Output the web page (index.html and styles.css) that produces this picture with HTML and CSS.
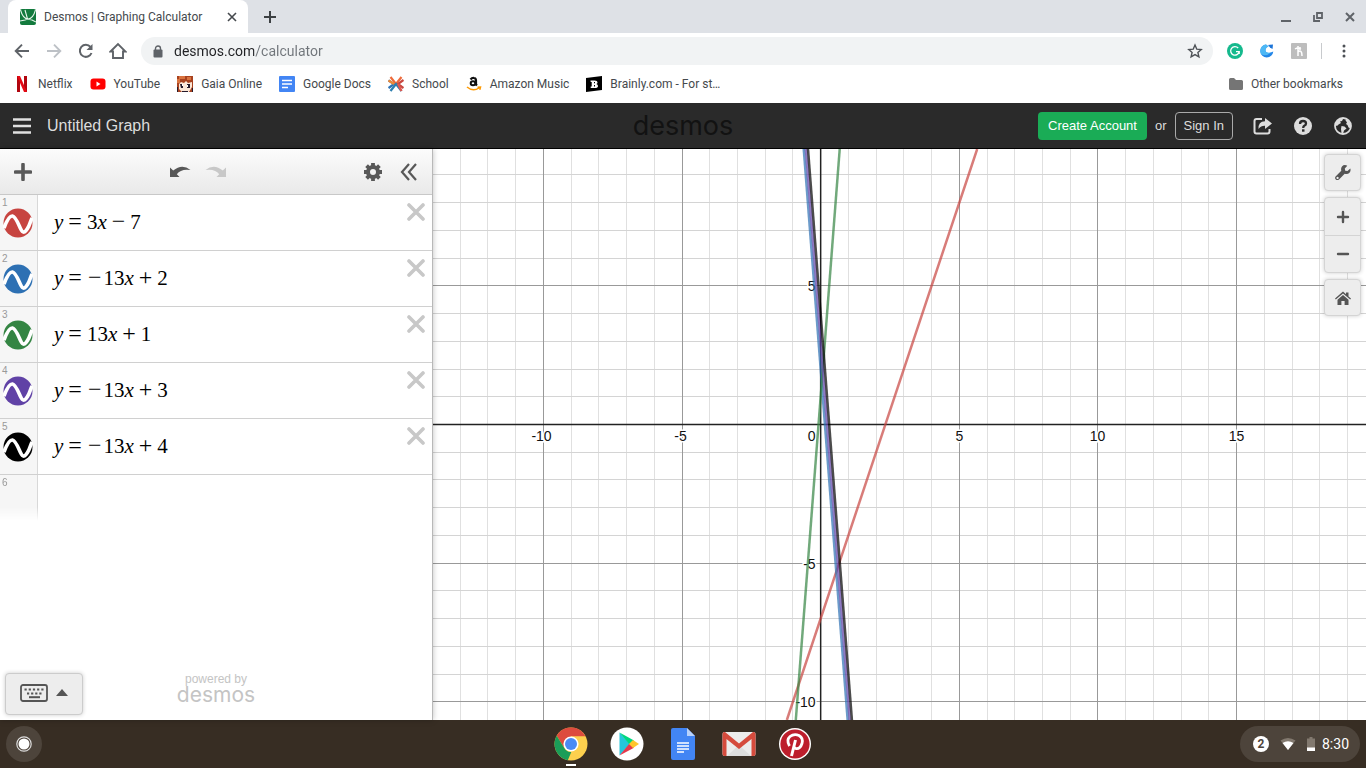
FILE: index.html
```
<!DOCTYPE html>
<html lang="en">
<head>
    <meta charset="UTF-8">
    <title>Desmos | Graphing Calculator</title>
    <link rel="stylesheet" href="styles.css">
</head>
<body>
    <!-- browser window -->
    <div class="tabstrip">
        <div class="tab">
            <svg width="16" height="16" viewBox="0 0 16 16"><rect width="16" height="16" rx="2" fill="#127a3d"/><path d="M.5 1Q3 10 8 10T15.500 1M5 1l2.500 9 4.500 1 4 2M0 12l5-1 3-1" fill="none" stroke="#e8f5ec" stroke-width="1.100"/></svg>
            <span class="tab-title">Desmos | Graphing Calculator</span>
            <button class="tab-close" aria-label="Close tab"><svg width="10" height="10" viewBox="0 0 10 10"><path d="M1 1l8 8M9 1L1 9" stroke="#45494d" stroke-width="1.6"/></svg></button>
        </div>
        <button class="tab-new" aria-label="New tab"><svg width="12" height="12" viewBox="0 0 12 12"><path d="M6 0v12M0 6h12" stroke="#3c4043" stroke-width="2"/></svg></button>
        <div class="window-buttons">
            <button aria-label="Minimize"><svg width="10" height="10" viewBox="0 0 10 10"><path d="M0 9h10" stroke="#5f6368" stroke-width="2"/></svg></button>
            <button aria-label="Restore"><svg width="10" height="10" viewBox="0 0 10 10"><path d="M4 1h5v5H4zM1 3v6h6" fill="none" stroke="#5f6368" stroke-width="1.8"/></svg></button>
            <button aria-label="Close"><svg width="10" height="10" viewBox="0 0 10 10"><path d="M1 1l8 8M9 1L1 9" stroke="#5f6368" stroke-width="2"/></svg></button>
        </div>
    </div>
    <div class="navbar">
        <button class="nav-btn" aria-label="Back"><svg width="16" height="16" viewBox="0 0 16 16"><path d="M15 8H2M8 1.700L1.700 8 8 14.300" fill="none" stroke="#5f6368" stroke-width="1.900"/></svg></button>
        <button class="nav-btn" aria-label="Forward" disabled><svg width="16" height="16" viewBox="0 0 16 16"><path d="M1 8h13M8 1.700L14.300 8 8 14.300" fill="none" stroke="#bdc1c6" stroke-width="1.900"/></svg></button>
        <button class="nav-btn" aria-label="Reload"><svg width="16" height="16" viewBox="0 0 16 16"><path d="M13.500 10A6 6 0 1 1 12.500 4" fill="none" stroke="#5f6368" stroke-width="2"/><path d="M14.500 1v6h-6z" fill="#5f6368"/></svg></button>
        <button class="nav-btn" aria-label="Home"><svg width="18" height="18" viewBox="0 0 18 18"><path d="M1.500 9.500L9 2l7.500 7.500H14V16H4V9.500z" fill="none" stroke="#5f6368" stroke-width="1.900"/></svg></button>
        <div class="omnibox">
            <svg width="10" height="13" viewBox="0 0 10 13"><path d="M2.500 5V3.500a2.500 2.500 0 0 1 5 0V5" fill="none" stroke="#5f6368" stroke-width="1.400"/><rect x="0.500" y="4.500" width="9" height="8" rx="1" fill="#5f6368"/></svg>
            <input class="url" type="text" value="desmos.com/calculator" aria-label="Address">
            <button aria-label="Bookmark this page"><svg width="16" height="16" viewBox="0 0 16 16"><path d="M8 2l1.800 4.200 4.400.4-3.300 2.900 1 4.400L8 11.600l-3.900 2.300 1-4.400L1.800 6.600l4.400-.4z" fill="none" stroke="#4d5156" stroke-width="1.400"/></svg></button>
        </div>
        <div class="extensions">
            <button aria-label="Grammarly"><svg width="16" height="16" viewBox="0 0 16 16"><circle cx="8" cy="8" r="8" fill="#15b98d"/><path d="M11.200 5A4.300 4.300 0 1 0 12.200 8.700H9M12.200 8.700V11" fill="none" stroke="#fff" stroke-width="1.300"/></svg></button>
            <button aria-label="Extension"><svg width="16" height="16" viewBox="0 0 16 16"><path d="M7 1.500a6.500 6.500 0 1 0 7.300 7L10 10Q6 10 6.500 6.500 7 4 9.500 3.500z" fill="#2386e8"/><path d="M7 1.500a6.500 6.500 0 0 0-5 9.500Q7 14 12 9.500 6 10.500 6.500 6.500 7 4 9.500 3.500z" fill="#4db8f5"/><path d="M9 2l5-.5L13.500 6 11 4.500z" fill="#1c74d8"/></svg></button>
            <button aria-label="Honey"><svg width="16" height="16" viewBox="0 0 16 16"><rect width="16" height="16" rx="1" fill="#bdbdbd"/><path d="M7 3v10M4 6q3-2 6 0M7 9q4-3 4 4M9 4v3" fill="none" stroke="#fff" stroke-width="1.500"/></svg></button>
            <span class="divider"></span>
            <button aria-label="Menu"><svg width="4" height="16" viewBox="0 0 4 16"><g fill="#4d5156"><circle cx="2" cy="3" r="1.500"/><circle cx="2" cy="8" r="1.500"/><circle cx="2" cy="13" r="1.500"/></g></svg></button>
        </div>
    </div>
    <div class="bookmarks">
        <a href="#"><svg width="16" height="16" viewBox="0 0 16 16"><path d="M3 0h3v16l-3 .3zM10 0h3v16l-3-.3z" fill="#b1060f"/><path d="M3 0h3l7 16h-3z" fill="#e50914"/></svg>Netflix</a>
        <a href="#"><svg width="16" height="16" viewBox="0 0 16 16"><rect x="0.500" y="2.500" width="15" height="11" rx="3" fill="#f00"/><path d="M6.500 5.500v5l4-2.500z" fill="#fff"/></svg>YouTube</a>
        <a href="#"><svg width="16" height="16" viewBox="0 0 16 16"><path fill="#a8421f" d="M0 0h16v16H0z"/><path fill="#d9733f" d="M2 0h6v3H2zM10 1h4v3h-4zM0 3h3v4H0z"/><path fill="#fbe6d6" d="M2 8l2-2 3 1 2-2 2 2 4-1v5l-3 5H5l-3-3z"/><path fill="#251b2c" d="M3 8h3v4H4zM10 8h3v4h-3zM0 11h1v5H0zM15 12h1v4h-1zM5 15h6v1H5z"/><path fill="#fff" d="M5 8h1v2H5zM10 9h1v2h-1z"/></svg>Gaia Online</a>
        <a href="#"><svg width="16" height="16" viewBox="0 0 16 16"><rect width="16" height="16" rx="1" fill="#4285f4"/><path d="M3 4.500h10M3 8h10M3 11.500h6" stroke="#fff" stroke-width="1.600"/></svg>Google Docs</a>
        <a href="#"><svg width="16" height="16" viewBox="0 0 16 16"><g fill="none" stroke-width="2.200"><path d="M.5 4.500L6 8 .5 12" stroke="#2d73b6"/><path d="M2.500 1L8 8l5.500-7" stroke="#ee6b3b"/><path d="M15.500 4L10 8l5.500 4" stroke="#c94740"/><path d="M2.500 15L8 8l5.500 7" stroke="#2d7fb0"/><path d="M.5 4.500L6 8" stroke="#f08a35"/><path d="M10 8l3.500 7" stroke="#e2574c"/></g></svg>School</a>
        <a href="#"><svg width="16" height="16" viewBox="0 0 16 16"><path d="M4.500 3.500Q6 1.700 8 2q2 .2 2 2.500v4l1 1" fill="none" stroke="#111" stroke-width="2.200"/><ellipse cx="7" cy="7.300" rx="2.300" ry="2" fill="none" stroke="#111" stroke-width="2"/><path d="M1 11q6 5 12 1M11.500 11.200l3-.2-.7 2.800" fill="none" stroke="#f90" stroke-width="1.500"/></svg>Amazon Music</a>
        <a href="#"><svg width="16" height="16" viewBox="0 0 16 16"><path d="M0 2l16-2v14L0 16z"/><path d="M4.500 4.500h4q3 0 3 2 0 1.200-1.200 1.600Q12 8.700 12 10q0 2-3.300 2h-4v-1.500h1v-4.500h-1zM8 6v1.300h1V6zm0 3v1.500h1V9z" fill="#fff" fill-rule="evenodd"/></svg>Brainly.com - For st…</a>
        <a href="#" class="other"><svg width="14" height="12" viewBox="0 0 14 12"><path d="M1.500 0H5l2 2h5.500Q14 2 14 3.500v7q0 1.500-1.500 1.500h-11Q0 12 0 10.500v-9Q0 0 1.500 0z" fill="#757575"/></svg>Other bookmarks</a>
    </div>

    <!-- desmos header -->
    <header class="header">
        <div class="header-left">
            <button aria-label="Menu"><svg width="18" height="16" viewBox="0 0 18 16"><path d="M0 1.500h18M0 8h18M0 14.500h18" stroke="#e0e0e0" stroke-width="2.600"/></svg></button>
            <span class="graph-title">Untitled Graph</span>
        </div>
        <a href="#" class="logo">desmos</a>
        <div class="header-right">
            <button class="btn btn-create">Create Account</button>
            <span class="or">or</span>
            <button class="btn btn-signin">Sign In</button>
            <button class="header-icon" aria-label="Share"><svg width="20" height="18" viewBox="0 0 20 18"><path d="M9 2H3.500Q1.500 2 1.500 4v10.500q0 2 2 2h11q2 0 2-2V12" fill="none" stroke="#ddd" stroke-width="2"/><path d="M5.500 12Q5 4.500 12 4.200V1l7 5.500-7 5.500V8.700Q8 8.500 5.500 12z" fill="#ddd"/></svg></button>
            <button class="header-icon" aria-label="Help"><svg width="18" height="18" viewBox="0 0 18 18"><circle cx="9" cy="9" r="9" fill="#ddd"/><path d="M6 7q0-3 3-3t3 2.600Q12 8 10.300 8.800 9.200 9.400 9.200 11" fill="none" stroke="#2a2a2a" stroke-width="2.300"/><path d="M8 12.300h2.500v2.400H8z" fill="#2a2a2a"/></svg></button>
            <button class="header-icon" aria-label="Language"><svg width="18" height="18" viewBox="0 0 18 18"><circle cx="9" cy="9" r="8" fill="none" stroke="#ddd" stroke-width="1.800"/><path d="M2 5l4-3.500 3 .5-1 2-2 .5L7 6 4.500 7.500 3 9 1 8zM7.500 9l3 .5 2 2-2.500 2-1 3.500-1.500-1-.5-4zM11 2.500l3 .5 3 4.500v4l-2.500-1-1-2.500L12 7l1-1.500z" fill="#ddd"/></svg></button>
        </div>
    </header>

    <main class="calc">
        <section class="panel">
            <div class="toolbar">
                <button class="add" aria-label="Add item"><svg width="18" height="18" viewBox="0 0 18 18"><path d="M9 1.500v15M1.500 9h15" stroke="#585858" stroke-width="3.600" stroke-linecap="round"/></svg></button>
                <div class="history">
                    <button aria-label="Undo"><svg width="22" height="14" viewBox="0 0 22 14"><path d="M1 2.500V12h9.500L7.800 9.200Q12 3.500 21.500 5 13-1.700 4.200 5.600z" fill="#585858"/></svg></button>
                    <button aria-label="Redo" disabled><svg width="22" height="14" viewBox="0 0 22 14"><path d="M21 2.500V12h-9.500l2.700-2.800Q10 3.500.5 5 9-1.700 17.800 5.600z" fill="#c8c8c8"/></svg></button>
                </div>
                <div class="toolbar-right">
                    <button aria-label="Edit list"><svg width="18" height="18" viewBox="0 0 18 18"><circle cx="9" cy="9" r="5" fill="none" stroke="#585858" stroke-width="4"/><path d="M9 0v3M9 15v3M0 9h3M15 9h3M2.600 2.600l2.200 2.200M13.200 13.200l2.200 2.200M15.400 2.600l-2.200 2.200M4.800 13.200l-2.200 2.200" stroke="#585858" stroke-width="3.800"/></svg></button>
                    <button aria-label="Hide list"><svg width="18" height="18" viewBox="0 0 18 18"><path d="M9 1L2 9l7 8M16 1L9 9l7 8" fill="none" stroke="#585858" stroke-width="2.200"/></svg></button>
                </div>
            </div>
            <ol class="expressions" id="expressions"></ol>
            <div class="powered"><span>powered by</span><a href="#" class="powered-logo">desmos</a></div>
            <button class="keypad" aria-label="Show keypad">
                <svg width="28" height="18" viewBox="0 0 28 18"><rect x="1" y="1" width="26" height="16" rx="2" fill="none" stroke="#555" stroke-width="1.800"/><path d="M4.500 5.500h20" stroke="#555" stroke-width="2.200" stroke-dasharray="2.200 2"/><path d="M7 9.500h15" stroke="#555" stroke-width="2.200" stroke-dasharray="2.200 1.900"/><path d="M9 13.200h11" stroke="#555" stroke-width="2"/></svg>
                <svg width="12" height="7" viewBox="0 0 12 7"><path d="M0 7l6-7 6 7z" fill="#555"/></svg>
            </button>
        </section>
        <section class="graph">
            <svg id="paper" class="paper" role="img" aria-label="Graph paper"></svg>
            <div class="controls">
                <button class="control" aria-label="Graph settings"><svg width="16" height="16" viewBox="0 0 16 16"><path d="M15.300 3.500L12.500 6 10.200 5.700 9.800 3.500 12.300.7Q9-.8 7 1.500 5.600 3.200 6.300 5.700L.8 11.200q-1.400 1.800 0 3.200t3.200 0l5.700-5.600q3 .8 4.800-1.100 1.600-1.900.8-4.200zM2.500 14a1.100 1.100 0 1 1 .1 0z" fill="#555"/></svg></button>
                <div class="zoom">
                    <button aria-label="Zoom in"><svg width="14" height="14" viewBox="0 0 14 14"><path d="M7 2v10M2 7h10" stroke="#555" stroke-width="2.400" stroke-linecap="round"/></svg></button>
                    <button aria-label="Zoom out"><svg width="14" height="14" viewBox="0 0 14 14"><path d="M2 7h10" stroke="#555" stroke-width="2.400" stroke-linecap="round"/></svg></button>
                </div>
                <button class="control" aria-label="Default view"><svg width="16" height="14" viewBox="0 0 16 14"><path d="M8 .5l3 2.700V1.500h2.500v4L16 7.600l-.8 1L8 2.500.8 8.600l-.8-1zM8 4l5.500 4.700V14H9.600v-4H6.400v4H2.500V8.700z" fill="#555"/></svg></button>
            </div>
        </section>
    </main>

    <!-- chromeos shelf -->
    <footer class="shelf">
        <button class="launcher" aria-label="Launcher"><svg width="16" height="16" viewBox="0 0 16 16"><circle cx="8" cy="8" r="7.200" fill="none" stroke="#ddd" stroke-width="1.200"/><circle cx="8" cy="8" r="5.500" fill="#fff"/></svg></button>
        <div class="apps">
            <button class="running" aria-label="Chrome"><svg width="34" height="34" viewBox="0 0 34 34"><circle cx="17" cy="17" r="16.500" fill="#fdd04e"/><path d="M2.700 8.700A16.500 16.500 0 0 1 31.500 9.300H17L10.300 21z" fill="#dd4b3e"/><path d="M2.700 8.700L10.300 21q2.700 4.500 7 4l-3.500 8.200A16.500 16.500 0 0 1 2.700 8.700z" fill="#1a9d58"/><circle cx="17" cy="17" r="7.600" fill="#fff"/><circle cx="17" cy="17" r="6" fill="#4a8af4"/></svg></button>
            <button aria-label="Play Store"><svg width="34" height="34" viewBox="0 0 34 34"><circle cx="17" cy="17" r="16.500" fill="#fff"/><path d="M9.500 5.500L20 17 9.500 28.500z" fill="#26c6da"/><path d="M9.500 5.500l14.500 8-4.500 4z" fill="#00d77f"/><path d="M9.500 28.500L24 20.800 19.500 16.500z" fill="#e5394c"/><path d="M23 13l6 4-6 4-4-4z" fill="#ffc62c"/></svg></button>
            <button aria-label="Docs"><svg width="34" height="34" viewBox="0 0 34 34"><path d="M7 1h14l8 8v22q0 2-2 2H7q-2 0-2-2V3q0-2 2-2z" fill="#4285f4"/><path d="M21 1l8 8h-8z" fill="#b9d2fb"/><path d="M11 16h12M11 19h12M11 22h12M11 25h7" stroke="#fff" stroke-width="1.400"/></svg></button>
            <button aria-label="Gmail"><svg width="34" height="34" viewBox="0 0 34 34"><rect x="0.500" y="5" width="33" height="24" rx="2" fill="#ececec"/><path d="M5 29l12-11 12 11z" fill="#ddd"/><path d="M.5 7v20q0 2 2 2H4.500V12L17 22l12.500-10v17h2q2 0 2-2V7q0-2-2-2H31L17 16.500 3 5h-.5q-2 0-2 2z" fill="#d54b3d"/></svg></button>
            <button aria-label="Pinterest"><svg width="34" height="34" viewBox="0 0 34 34"><circle cx="17" cy="17" r="16" fill="#fff"/><circle cx="17" cy="17" r="14.600" fill="#bd1e2c"/><path d="M11.500 19Q8 13 12 9.500 16 6.500 21 8.500q4.500 2.500 3 8Q22 22.500 17.500 21.500l-1.500-1" fill="none" stroke="#fff" stroke-width="2.800"/><path d="M17.500 13L13.500 29" stroke="#fff" stroke-width="3"/></svg></button>
        </div>
        <button class="tray">
            <span class="count">2</span>
            <svg width="16" height="12" viewBox="0 0 16 12"><path d="M.5 2.500Q8-2.500 15.500 2.500L8 12z" fill="#82796f"/><path d="M2.500 5Q8 1.500 13.500 5L8 12z" fill="#fff"/></svg>
            <svg width="8" height="14" viewBox="0 0 8 14"><path d="M2.500 0h3v1.500H8V11H0V1.500h2.500z" fill="#82796f"/><path d="M0 10.500h8V14H0z" fill="#fff"/></svg>
            <time>8:30</time>
        </button>
    </footer>
    <script src="graph.js"></script>
</body>
</html>
```

FILE: graph.js
```
window.onload=function () {
    // m: slope, b: intercept
    var lines=[
        {color:'#c74440',m:3,b:-7},
        {color:'#2d70b3',m:-13,b:2},
        {color:'#348543',m:13,b:1},
        {color:'#6042a6',m:-13,b:3},
        {color:'#000000',m:-13,b:4}
    ];
    var unit=27.73;
    var oList=document.getElementById('expressions');
    var oPaper=document.getElementById('paper');

    function formula(line) {
        var html='<i>y</i><span class="op">=</span>';
        if(line.m<0) html+='<span class="neg">−</span>';
        html+=Math.abs(line.m)+'<i>x</i>';
        html+='<span class="op">'+(line.b<0?'−':'+')+'</span>'+Math.abs(line.b);
        return html;
    }

    var rows='';
    lines.forEach(function (line,index) {
        rows+='<li class="expression"><div class="gutter"><span class="index">'+(index+1)+'</span>'+
            '<button class="curve" aria-label="Hide expression '+(index+1)+'"><svg width="30" height="30" viewBox="0 0 30 30">'+
            '<circle cx="15" cy="15" r="14.5" fill="'+line.color+'"/>'+
            '<path d="M1 20C4 12 6.500 7.500 9.500 8S15 15 17.500 20.500 22 24.500 24.500 20.500 27 14 29 10" fill="none" stroke="#fff" stroke-width="3.6"/></svg></button></div>'+
            '<div class="math">'+formula(line)+'</div>'+
            '<button class="delete" aria-label="Delete expression '+(index+1)+'"><svg width="18" height="18" viewBox="0 0 18 18">'+
            '<path d="M2 2l14 14M16 2L2 16" stroke="#c8c8c8" stroke-width="3.6" stroke-linecap="round"/></svg></button></li>';
    });
    rows+='<li class="expression blank"><div class="gutter"><span class="index">'+(lines.length+1)+'</span></div></li>';
    oList.innerHTML=rows;

    function draw() {
        var w=oPaper.clientWidth,h=oPaper.clientHeight;
        var x0=w*0.4155,y0=h*0.4825;
        var minorX='',minorY='',major='',labels='',curves='',n,p;

        function snap(v) {
            return Math.floor(v)+0.5;
        }
        for(n=Math.ceil(-x0/unit);n<=(w-x0)/unit;n++){
            p=snap(x0+n*unit);
            if(n===0) continue;
            if(n%5===0){
                major+='M'+p+' 0V'+h;
                labels+='<text x="'+(n<0?p-2:p)+'" y="'+(y0+16)+'" text-anchor="middle">'+n+'</text>';
            }else{
                minorX+='M'+p+' 0V'+h;
            }
        }
        for(n=Math.ceil((y0-h)/unit);n<=y0/unit;n++){
            p=snap(y0-n*unit);
            if(n===0) continue;
            if(n%5===0){
                major+='M0 '+p+'H'+w;
                labels+='<text x="'+(x0-5)+'" y="'+(p+5)+'" text-anchor="end">'+n+'</text>';
            }else{
                minorY+='M0 '+p+'H'+w;
            }
        }
        labels+='<text x="'+(x0-5)+'" y="'+(y0+16)+'" text-anchor="end">0</text>';
        lines.forEach(function (line) {
            // x at the top and at the bottom edge
            var xt=x0+(y0/unit-line.b)/line.m*unit;
            var xb=x0+((y0-h)/unit-line.b)/line.m*unit;
            curves+='<path class="line" stroke="'+line.color+'" d="M'+xt+' 0L'+xb+' '+h+'"/>';
        });
        oPaper.innerHTML='<path class="minor-x" d="'+minorX+'"/><path class="minor-y" d="'+minorY+'"/>'+
            '<path class="major" d="'+major+'"/>'+
            '<path class="axis" d="M0 '+y0+'H'+w+'M'+x0+' 0V'+h+'"/><g class="labels">'+labels+'</g>'+curves;
    }
    draw();
    window.onresize=draw;
}
```

FILE: styles.css
```
*{
    box-sizing: border-box;
    margin: 0;
    padding: 0;
}
body{
    display: flex;
    flex-direction: column;
    height: 100vh;
    overflow: hidden;
    font-family: Roboto, sans-serif;
    font-size: 12px;
    color: #45494d;
    background: #fff;
}
button{
    display: flex;
    align-items: center;
    justify-content: center;
    border: 0;
    background: none;
    font: inherit;
    color: inherit;
}
a{
    color: inherit;
    text-decoration: none;
}
svg{
    display: block;
    flex: none;
}

/* browser */
.tabstrip{
    display: flex;
    flex: none;
    height: 33px;
    padding-left: 8px;
    background: #dee1e6;
}
.tab{
    display: flex;
    align-items: center;
    width: 240px;
    padding: 0 10px 0 12px;
    border-radius: 8px 8px 0 0;
    background: #fff;
}
.tab-title{
    flex: 1;
    margin-left: 8px;
    white-space: nowrap;
}
.tab-close{
    width: 12px;
    height: 16px;
}
.tab-new{
    width: 44px;
}
.window-buttons{
    display: flex;
    margin-left: auto;
}
.window-buttons button{
    width: 32px;
}
.navbar{
    display: flex;
    flex: none;
    align-items: center;
    height: 36px;
    padding-left: 6px;
}
.nav-btn{
    width: 32px;
    height: 32px;
}
.omnibox{
    display: flex;
    flex: 1;
    align-items: center;
    height: 28px;
    margin-left: 7px;
    padding: 0 10px 0 12px;
    border-radius: 14px;
    background: #f1f3f4;
}
.url{
    flex: 1;
    height: 28px;
    margin-left: 11px;
    border: 0;
    outline: 0;
    font: 14px Roboto, sans-serif;
    /* host dark, path grey */
    color: transparent;
    background: linear-gradient(90deg, #202124 80px, #70757a 80px);
    -webkit-background-clip: text;
    background-clip: text;
}
.extensions{
    display: flex;
    align-items: center;
    padding-right: 6px;
    margin-left: 6px;
}
.extensions button{
    width: 32px;
    height: 32px;
}
.divider{
    width: 1px;
    height: 16px;
    margin: 0 6px;
    background: #c8cacd;
}
.bookmarks{
    display: flex;
    flex: none;
    align-items: center;
    gap: 17px;
    height: 34px;
    padding: 0 23px 4px 14px;
}
.bookmarks a{
    display: flex;
    align-items: center;
    gap: 8px;
    white-space: nowrap;
}
.bookmarks .other{
    margin-left: auto;
}

/* header */
.header{
    display: grid;
    grid-template-columns: 1fr auto 1fr;
    align-items: center;
    flex: none;
    height: 46px;
    padding: 0 13px;
    border-bottom: 1px solid #000;
    background: #2a2a2a;
    color: #ddd;
    font-family: "Liberation Sans", Arial, sans-serif;
    font-size: 13px;
}
.header-left,
.header-right{
    display: flex;
    align-items: center;
}
.header-right{
    justify-content: flex-end;
}
.graph-title{
    margin-left: 16px;
    font-size: 16px;
}
.logo{
    font: 27px Inter, sans-serif;
    color: #121212;
}
.btn{
    height: 28px;
    padding: 0 10px;
    border-radius: 4px;
}
.btn-create{
    background: #1aac56;
    color: #fff;
}
.btn-signin{
    border: 1px solid #aaa;
    padding: 0 8px;
}
.or{
    margin: 0 8px;
}
.header-icon{
    width: 20px;
    margin-left: 20px;
}

/* expression list */
.calc{
    display: flex;
    flex: 1;
    min-height: 0;
    font-family: "Liberation Sans", Arial, sans-serif;
}
.panel{
    position: relative;
    z-index: 1;
    display: flex;
    flex: none;
    flex-direction: column;
    width: 433px;
    border-right: 1px solid #b8b8b8;
    background: #fff;
    box-shadow: 0 0 6px rgba(0, 0, 0, .25);
}
.toolbar{
    display: grid;
    grid-template-columns: 1fr auto 1fr;
    align-items: center;
    flex: none;
    height: 46px;
    padding: 0 14px;
    border-bottom: 1px solid #c8c8c8;
    background: linear-gradient(#fcfcfc, #e9e9e9);
}
.history{
    display: flex;
    gap: 14px;
    margin-right: 36px;
}
.toolbar-right{
    display: flex;
    justify-content: flex-end;
    gap: 18px;
}
.add{
    width: 18px;
}
.expressions{
    flex: 1;
    list-style: none;
}
.expression{
    display: flex;
    height: 56px;
    border-bottom: 1px solid #d0d0d0;
}
.gutter{
    width: 38px;
    padding: 2px 0 0 2px;
    border-right: 1px solid #d8d8d8;
    background: #f6f6f6;
}
.index{
    display: block;
    font-size: 10px;
    line-height: 11px;
    color: #999;
}
.curve{
    margin-left: 1px;
}
.math{
    flex: 1;
    padding-left: 16px;
    font: 21px/54px "Liberation Serif", "Times New Roman", serif;
    color: #000;
}
.math .op,
.math .neg{
    font-size: 24px;
    line-height: 1;
}
.math .op{
    margin: 0 5px;
}
.math .neg{
    margin: 0 2px 0 1px;
}
.delete{
    width: 18px;
    height: 18px;
    margin: 8px 7px 0 0;
}
.blank{
    height: 46px;
    border-bottom: 0;
}
.blank .gutter{
    -webkit-mask-image: linear-gradient(#000 70%, transparent);
    mask-image: linear-gradient(#000 70%, transparent);
}
.powered{
    display: flex;
    flex-direction: column;
    align-items: center;
    padding-bottom: 16px;
    font-size: 12px;
    line-height: 13px;
    color: #c4c4c4;
}
.powered-logo{
    font: 21px/18px Inter, sans-serif;
}
.keypad{
    position: absolute;
    left: 5px;
    bottom: 5px;
    gap: 8px;
    width: 78px;
    height: 42px;
    padding-bottom: 3px;
    border: 1px solid #ccc;
    border-radius: 4px;
    background: #ededed;
    box-shadow: 0 0 4px rgba(0, 0, 0, .2);
}

/* graph paper */
.graph{
    position: relative;
    flex: 1;
    min-width: 0;
}
.paper{
    width: 100%;
    height: 100%;
}
.paper path{
    fill: none;
}
.minor-x{
    stroke: #e0e0e0;
}
.minor-y{
    stroke: #d4d4d4;
}
.major{
    stroke: #999;
}
.axis{
    stroke: #222;
    stroke-width: 1.5;
}
.line{
    stroke-width: 2.5;
    opacity: .7;
}
.labels{
    font-size: 14px;
    fill: #111;
    stroke: #fff;
    stroke-width: 3px;
    paint-order: stroke;
}
.controls{
    position: absolute;
    top: 5px;
    right: 5px;
    display: flex;
    flex-direction: column;
    gap: 6px;
    width: 37px;
}
.control,
.zoom{
    border: 1px solid #d4d4d4;
    border-radius: 4px;
    background: #ededed;
    box-shadow: 0 0 4px rgba(0, 0, 0, .2);
}
.control{
    height: 37px;
}
.zoom button{
    width: 100%;
    height: 37px;
}
.zoom button + button{
    border-top: 1px solid #d4d4d4;
}

/* shelf */
.shelf{
    display: grid;
    grid-template-columns: 1fr auto 1fr;
    align-items: center;
    flex: none;
    height: 48px;
    padding: 0 6px;
    background: #372d23;
}
.launcher{
    width: 36px;
    height: 36px;
    border-radius: 50%;
    background: #4d443b;
}
.apps{
    display: flex;
    gap: 22px;
}
.apps button{
    position: relative;
    height: 48px;
}
.running::after{
    content: "";
    position: absolute;
    bottom: 2px;
    left: 12px;
    width: 10px;
    height: 2px;
    background: #fff;
}
.tray{
    justify-self: end;
    gap: 11px;
    width: 120px;
    height: 36px;
    padding-left: 2px;
    border-radius: 18px;
    background: #4d443b;
    color: #fff;
}
.count{
    width: 16px;
    border-radius: 50%;
    background: #fff;
    color: #4d443b;
    font-weight: 700;
    line-height: 16px;
}
.tray time{
    margin-left: -4px;
    font-size: 14px;
}
```
